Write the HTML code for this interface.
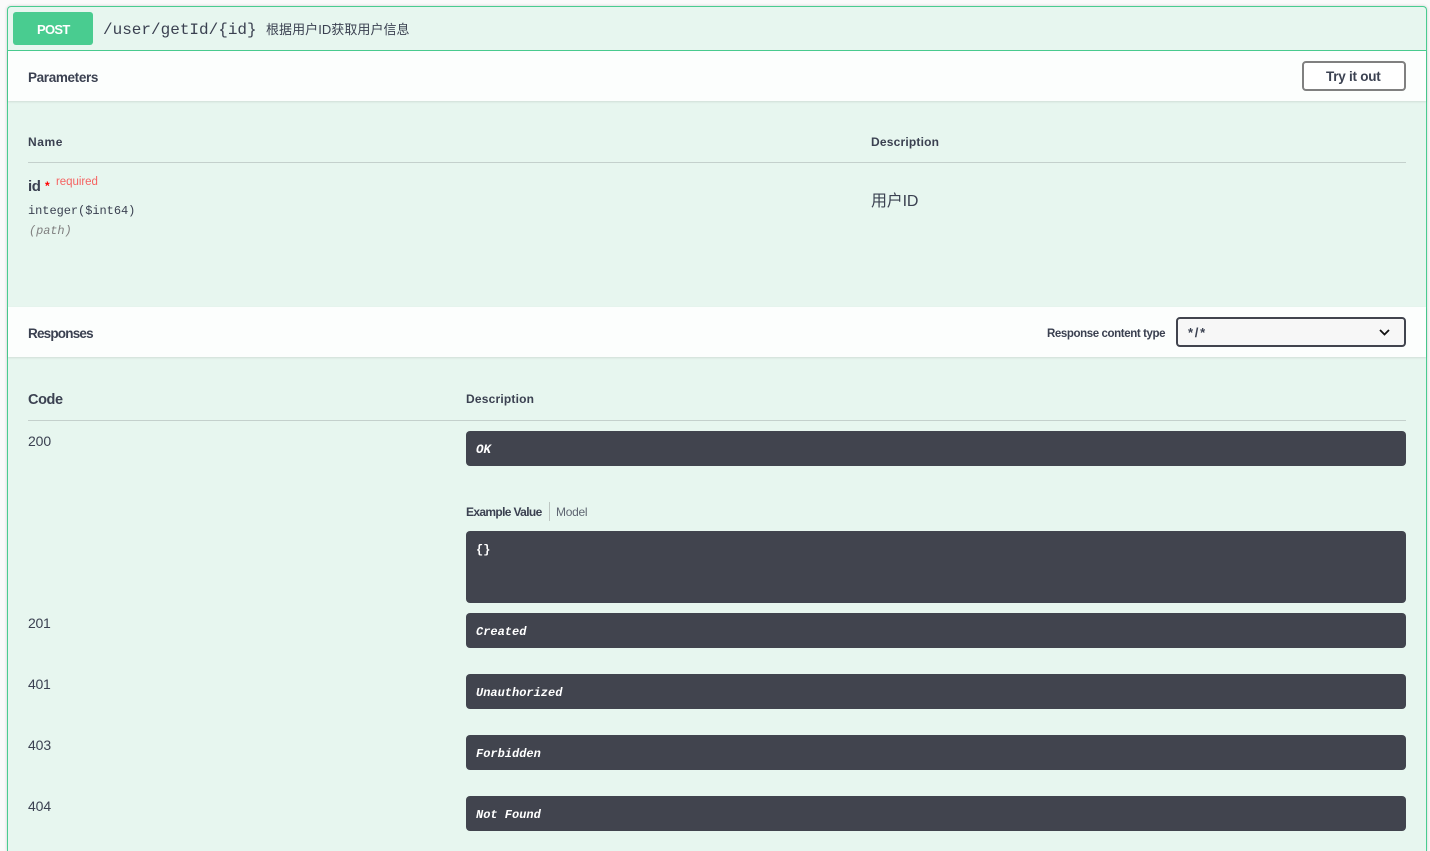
<!DOCTYPE html>
<html><head><meta charset="utf-8">
<style>
html,body{margin:0;padding:0;width:1430px;height:851px;overflow:hidden;background:#fff}
#w{position:relative;width:1430px;height:851px;overflow:hidden;background:#fafafa}
.t{position:absolute;white-space:nowrap;font-family:"Liberation Sans","Noto Sans CJK SC",sans-serif;color:#3b4151;line-height:1}
.m{font-family:"Liberation Mono","DejaVu Sans Mono",monospace}
.b{font-weight:700}
.box{position:absolute;background:#41444e;border-radius:4px;left:466px;width:940px}
.i{font-style:italic;font-weight:700;color:#fff;left:476px}
.line{position:absolute;height:1px;background:#c4d0cc}
.bar{position:absolute;left:8px;width:1418px;height:50px;background:#fcfefd;box-shadow:0 1px 2px rgba(0,0,0,.1)}
</style></head><body><div id="w">
<div style="position:absolute;left:7px;top:6px;width:1418px;height:844px;border:1px solid #49cc90;border-bottom:0;border-radius:4px 4px 0 0;background:#e7f6ef;box-shadow:0 0 3px rgba(0,0,0,.19)"></div>
<div style="position:absolute;left:8px;top:50px;width:1418px;height:1px;background:#49cc90"></div>
<div style="position:absolute;left:13px;top:12px;width:80px;height:33px;background:#49cc90;border-radius:3px"></div>
<div class="t b" style="left:37px;top:23px;font-size:13px;color:#fff;letter-spacing:-.7px">POST</div>
<div class="t m" style="left:103px;top:22px;font-size:16px;color:#3b4151">/user/getId/{id}</div>
<div class="t" style="left:266px;top:23px;font-size:13px;letter-spacing:.05px">根据用户ID获取用户信息</div>

<div class="bar" style="top:51px"></div>
<div class="t b" style="left:28px;top:71px;font-size:13.5px;letter-spacing:-.35px">Parameters</div>
<div style="position:absolute;left:1302px;top:61px;width:100px;height:26px;border:2px solid #808080;border-radius:4px;background:#fff"></div>
<div class="t b" style="left:1326px;top:70px;font-size:13.5px;letter-spacing:-.25px">Try it out</div>

<div class="t b" style="left:28px;top:136px;font-size:12px;letter-spacing:.6px">Name</div>
<div class="t b" style="left:871px;top:136px;font-size:12px;letter-spacing:.2px">Description</div>
<div class="line" style="left:28px;top:162px;width:1378px"></div>
<div class="t b" style="left:28px;top:179px;font-size:15px;letter-spacing:-.4px">id</div>
<div class="t b" style="left:45px;top:180px;font-size:12px;color:#f00">*</div>
<div class="t" style="left:56px;top:177px;font-size:11.5px;color:#f93e3e;opacity:.8;letter-spacing:-.05px">required</div>
<div class="t m" style="left:28px;top:205px;font-size:12px;letter-spacing:-.05px">integer($int64)</div>
<div class="t m" style="left:29px;top:225px;font-size:12px;font-style:italic;color:#808080;letter-spacing:-.1px">(path)</div>
<div class="t" style="left:871px;top:194px;font-size:16px;letter-spacing:-.2px">用户ID</div>

<div class="bar" style="top:307px"></div>
<div class="t b" style="left:28px;top:327px;font-size:13.5px;letter-spacing:-.8px">Responses</div>
<div class="t b" style="left:1047px;top:329px;font-size:11.5px;letter-spacing:-.4px">Response content type</div>
<div style="position:absolute;left:1176px;top:317px;width:226px;height:26px;border:2px solid #41444e;border-radius:4px;background:#f7f7f7"></div>
<div class="t b" style="left:1188px;top:326px;font-size:13px;letter-spacing:1.7px">*/*</div>
<svg style="position:absolute;left:1378px;top:327px" width="13" height="11" viewBox="0 0 13 11"><path d="M2 3 L6.5 7.5 L11 3" fill="none" stroke="#111" stroke-width="1.8"/></svg>

<div class="t b" style="left:28px;top:393px;font-size:14.5px;letter-spacing:-.4px">Code</div>
<div class="t b" style="left:466px;top:393px;font-size:12px;letter-spacing:.2px">Description</div>
<div class="line" style="left:28px;top:420px;width:1378px"></div>

<div class="t" style="left:28px;top:434px;font-size:14px;letter-spacing:-.1px">200</div>
<div class="box" style="top:431px;height:35px"></div>
<div class="t m i" style="top:444px;font-size:12.5px">OK</div>
<div class="t b" style="left:466px;top:506px;font-size:12px;letter-spacing:-.65px">Example Value</div>
<div style="position:absolute;left:549px;top:502px;width:1px;height:19px;background:#bcc6c2"></div>
<div class="t" style="left:556px;top:506px;font-size:12px;letter-spacing:-.3px;color:#5f6672">Model</div>
<div class="box" style="top:531px;height:72px"></div>
<div class="t m b" style="left:476px;top:544px;font-size:12px;color:#fff">{}</div>

<div class="t" style="left:28px;top:616px;font-size:14px;letter-spacing:-.3px">201</div>
<div class="box" style="top:613px;height:35px"></div>
<div class="t m i" style="top:626px;font-size:12px">Created</div>

<div class="t" style="left:28px;top:677px;font-size:14px;letter-spacing:-.3px">401</div>
<div class="box" style="top:674px;height:35px"></div>
<div class="t m i" style="top:687px;font-size:12px">Unauthorized</div>

<div class="t" style="left:28px;top:738px;font-size:14px;letter-spacing:-.1px">403</div>
<div class="box" style="top:735px;height:35px"></div>
<div class="t m i" style="top:748px;font-size:12px">Forbidden</div>

<div class="t" style="left:28px;top:799px;font-size:14px;letter-spacing:-.1px">404</div>
<div class="box" style="top:796px;height:35px"></div>
<div class="t m i" style="top:809px;font-size:12px">Not Found</div>
</div></body></html>
